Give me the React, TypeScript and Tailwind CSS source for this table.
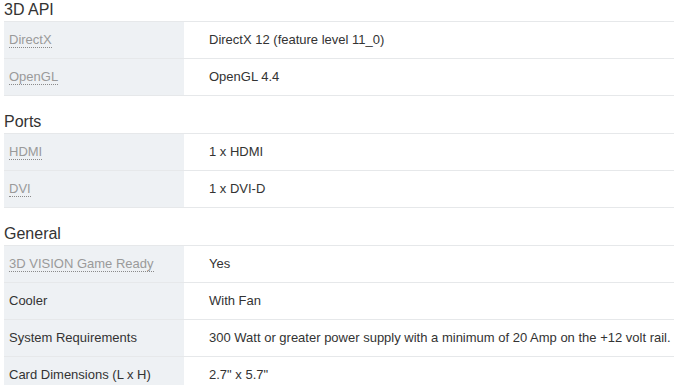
import React from 'react';

type Spec = { label: string; value: string; link?: boolean };
type Section = { title: string; rows: Spec[] };

const sections: Section[] = [
  {
    title: '3D API',
    rows: [
      { label: 'DirectX', value: 'DirectX 12 (feature level 11_0)', link: true },
      { label: 'OpenGL', value: 'OpenGL 4.4', link: true },
    ],
  },
  {
    title: 'Ports',
    rows: [
      { label: 'HDMI', value: '1 x HDMI', link: true },
      { label: 'DVI', value: '1 x DVI-D', link: true },
    ],
  },
  {
    title: 'General',
    rows: [
      { label: '3D VISION Game Ready', value: 'Yes', link: true },
      { label: 'Cooler', value: 'With Fan' },
      {
        label: 'System Requirements',
        value: '300 Watt or greater power supply with a minimum of 20 Amp on the +12 volt rail.',
      },
      { label: 'Card Dimensions (L x H)', value: '2.7" x 5.7"' },
    ],
  },
];

const SpecRow: React.FC<{ spec: Spec }> = ({ spec }) => (
  <div className="flex h-[37px] border-b border-[#e6e8ea]">
    <div className="w-[180px] shrink-0 bg-[#eef1f4] pl-[5px] flex items-center">
      {spec.link ? (
        <span className="text-[#9a9a9a] border-b border-dotted border-[#8a8a8a] leading-[15px] cursor-help">
          {spec.label}
        </span>
      ) : (
        <span className="text-[#333]">{spec.label}</span>
      )}
    </div>
    <div className="flex-1 pl-[25px] flex items-center text-[#333] whitespace-nowrap">{spec.value}</div>
  </div>
);

const App: React.FC = () => {
  return (
    <div className="w-[675px] h-[385px] overflow-hidden bg-white font-['Liberation_Sans',Arial,sans-serif] text-[13px]">
      <div className="pl-[4px] pr-[1px]">
        {sections.map((s, i) => (
          <div key={s.title} className={i > 0 ? 'mt-[16px]' : ''}>
            <h3 className="text-[16px] leading-[19px] pb-[2px] text-[#333]">{s.title}</h3>
            <div className="border-t border-[#e6e8ea]">
              {s.rows.map((r) => (
                <SpecRow key={r.label} spec={r} />
              ))}
            </div>
          </div>
        ))}
      </div>
    </div>
  );
};

export default App;
